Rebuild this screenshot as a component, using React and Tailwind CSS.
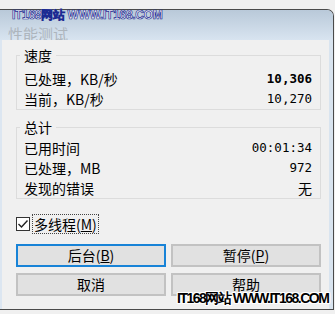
import React from 'react';

const cjk = "font-['Noto_Sans_CJK_SC','Noto_Sans',sans-serif]";
const mono = "font-['DejaVu_Sans_Mono','Noto_Sans_CJK_SC',monospace]";
const outline = '[text-shadow:1px_0_#fff,-1px_0_#fff,0_1px_#fff,0_-1px_#fff,1px_1px_#fff,-1px_-1px_#fff,1px_-1px_#fff,-1px_1px_#fff]';

const Row = ({ label, value, bold }) => (
  <div className="flex items-center justify-between h-[20px] pl-[4px]">
    <span className="text-[14px] leading-[20px] text-black">{label}</span>
    <span className={`${mono} text-[12.5px] leading-[20px] text-black ${bold ? 'font-bold' : ''}`}>{value}</span>
  </div>
);

const Group = ({ title, className, children }) => (
  <fieldset className={`border border-[#dcdcdc] pl-[3px] pr-[8px] ${className}`}>
    <legend className="px-[4px] text-[14px] leading-[18px] text-black">{title}</legend>
    {children}
  </fieldset>
);

const Button = ({ children, focused }) => (
  <button
    className={`h-[23px] bg-[#e1e1e1] text-[14px] leading-[19px] text-black flex items-center justify-center ${
      focused ? 'border-2 border-[#1883d7]' : 'border-2 border-[#c2c2c2]'
    }`}
  >
    {children}
  </button>
);

export default function App() {
  return (
    <div className={`${cjk} relative w-[335px] h-[314px] bg-[#f0f0f0] pt-[9px] overflow-hidden`}>
      <div className="w-[334px] h-[301px] border-t border-r border-b border-[#4a4a4a] rounded-tr-[7px] flex flex-col overflow-hidden bg-[#dbe5f0]">
        <div className="h-[30px] shrink-0 bg-gradient-to-b from-[#b9c9d9] to-[#d8e4f0] pl-[8px] pt-[11px]">
          <span className="text-[15px] leading-[18px] text-[#adb5bd]">性能测试</span>
        </div>
        <div className="flex-1 flex">
          <div className="w-[2px] bg-[#dce6f1]" />
          <div className="flex-1 bg-[#f0f0f0] pl-[14px] pr-[8px] flex flex-col">
            <Group title="速度" className="mt-[6px] pt-[5px]">
              <Row label="已处理，KB/秒" value="10,306" bold />
              <Row label="当前，KB/秒" value="10,270" />
            </Group>
            <Group title="总计" className="mt-[8px] pt-[2px]">
              <Row label="已用时间" value="00:01:34" />
              <Row label="已处理，MB" value="972" />
              <div className="flex items-center justify-between h-[20px] pl-[4px]">
                <span className="text-[14px] leading-[20px] text-black">发现的错误</span>
                <span className="text-[14px] leading-[20px] text-black">无</span>
              </div>
            </Group>
            <div className="mt-[15px] h-[20px] flex items-center">
              <span className="w-[14px] h-[14px] border border-[#333] bg-white flex items-center justify-center">
                <svg width="12" height="12" viewBox="0 0 12 12">
                  <polyline points="1.5,6 4.5,9 10.5,2.5" fill="none" stroke="#222" strokeWidth="1.4" />
                </svg>
              </span>
              <span className="ml-[2px] border border-dotted border-[#444] px-[1px] text-[14px] leading-[18px] text-black">
                多线程(<span className="underline">M</span>)
              </span>
            </div>
            <div className="mt-[10px] grid grid-cols-2 gap-x-[5px] gap-y-[6px]">
              <Button focused>后台(<span className="underline">B</span>)</Button>
              <Button>暂停(<span className="underline">P</span>)</Button>
              <Button>取消</Button>
              <Button>帮助</Button>
            </div>
          </div>
          <div className="w-[4px] bg-[#d9e4ef]" />
        </div>
      </div>

      <div className="absolute left-[12px] top-[8px] font-['Liberation_Sans',sans-serif] font-bold text-[12px] leading-[14px] tracking-[-0.3px] text-white [-webkit-text-stroke:0.7px_#1b2a92] whitespace-nowrap">
        IT168网站 WWW.IT168.COM
      </div>
      <div className={`absolute left-[177px] top-[290px] font-['Liberation_Sans',sans-serif] font-black text-[14px] leading-[16px] tracking-[-1.5px] text-black whitespace-nowrap ${outline}`}>
        IT168网站 WWW.IT168.COM
      </div>
    </div>
  );
}
